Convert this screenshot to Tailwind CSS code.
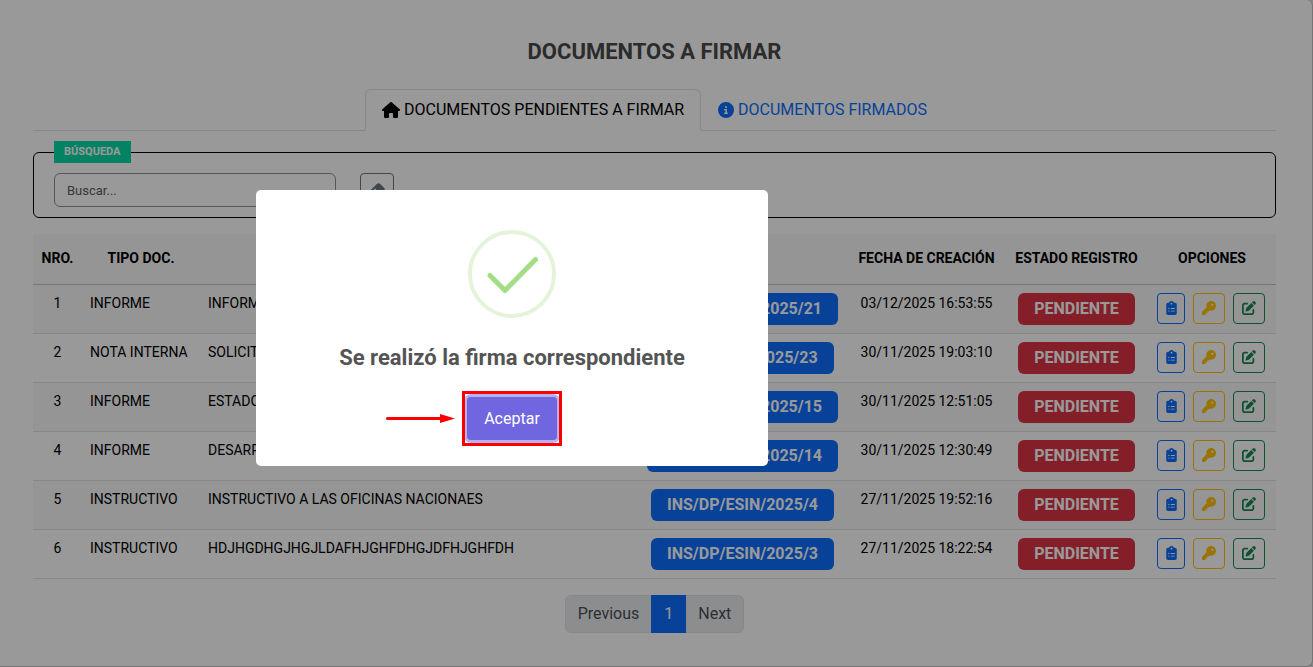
<!DOCTYPE html>
<html lang="es">
<head>
    <meta charset="UTF-8">
    <meta name="viewport" content="width=device-width, initial-scale=1.0">
    <title>Documentos a firmar</title>
    <script src="https://cdn.jsdelivr.net/npm/@tailwindcss/browser@4"></script>
</head>
<body class="bg-[#dcdcdc] font-['Roboto','Liberation_Sans',sans-serif] text-base text-black">
    <!-- Icons -->
    <svg class="hidden">
        <symbol id="house" viewBox="0 0 576 512"><path d="M575.8 255.5c0 18-15 32.1-32 32.1h-32l.7 160.2c0 2.7-.2 5.4-.5 8.1V472c0 22.1-17.9 40-40 40H456c-1.1 0-2.2 0-3.3-.1c-1.4 .1-2.8 .1-4.2 .1H416 392c-22.1 0-40-17.9-40-40V448 384c0-17.7-14.3-32-32-32H256c-17.7 0-32 14.3-32 32v64 24c0 22.1-17.9 40-40 40H160 128.1c-1.5 0-3-.1-4.5-.2c-1.2 .1-2.4 .2-3.6 .2H104c-22.1 0-40-17.9-40-40V360c0-.9 0-1.9 .1-2.8V287.6H32c-18 0-32-14-32-32.1c0-9 3-17 10-24L266.4 8c7-7 15-8 22-8s15 2 21 7L564.8 231.5c8 7 12 15 11 24z"/></symbol>
        <symbol id="info" viewBox="0 0 512 512"><path d="M256 512A256 256 0 1 0 256 0a256 256 0 1 0 0 512zM216 336h24V272H216c-13.3 0-24-10.7-24-24s10.7-24 24-24h48c13.3 0 24 10.7 24 24v88h8c13.3 0 24 10.7 24 24s-10.7 24-24 24H216c-13.3 0-24-10.7-24-24s10.7-24 24-24zm40-208a32 32 0 1 1 0 64 32 32 0 1 1 0-64z"/></symbol>
        <symbol id="eraser" viewBox="0 0 576 512"><path d="M290.7 57.4L57.4 290.7c-25 25-25 65.5 0 90.5l80 80c12 12 28.3 18.7 45.3 18.7H288h9.4H512c17.7 0 32-14.3 32-32s-14.3-32-32-32H387.9L518.6 285.3c25-25 25-65.5 0-90.5L381.3 57.4c-25-25-65.5-25-90.5 0zM297.4 416H288l-105.4 0-80-80L227.3 211.3 364.7 348.7 297.4 416z"/></symbol>
        <symbol id="clipboard" viewBox="0 0 384 512"><path d="M192 0c-41.8 0-77.4 26.7-90.5 64H64C28.7 64 0 92.7 0 128V448c0 35.3 28.7 64 64 64H320c35.3 0 64-28.7 64-64V128c0-35.3-28.7-64-64-64H282.5C269.4 26.7 233.8 0 192 0zm0 64a32 32 0 1 1 0 64 32 32 0 1 1 0-64zM72 272a24 24 0 1 1 48 0 24 24 0 1 1 -48 0zm104-16H304c8.8 0 16 7.2 16 16s-7.2 16-16 16H176c-8.8 0-16-7.2-16-16s7.2-16 16-16zM72 368a24 24 0 1 1 48 0 24 24 0 1 1 -48 0zm88 0c0-8.8 7.2-16 16-16H304c8.8 0 16 7.2 16 16s-7.2 16-16 16H176c-8.8 0-16-7.2-16-16z"/></symbol>
        <symbol id="key" viewBox="0 0 512 512"><path d="M336 352c97.2 0 176-78.8 176-176S433.2 0 336 0S160 78.8 160 176c0 18.7 2.9 36.8 8.3 53.7L7 391c-4.5 4.5-7 10.6-7 17v80c0 13.3 10.7 24 24 24h80c13.3 0 24-10.7 24-24V448h40c13.3 0 24-10.7 24-24V384h40c6.4 0 12.5-2.5 17-7l33.3-33.3c16.9 5.4 35 8.3 53.7 8.3zM376 96a40 40 0 1 1 0 80 40 40 0 1 1 0-80z"/></symbol>
        <symbol id="edit" viewBox="0 0 512 512"><path d="M471.6 21.7c-21.9-21.9-57.3-21.9-79.2 0L362.3 51.7l97.9 97.9 30.1-30.1c21.9-21.9 21.9-57.3 0-79.2L471.6 21.7zm-299.2 220c-6.1 6.1-10.8 13.6-13.5 21.9l-29.6 88.8c-2.9 8.6-.6 18.1 5.8 24.6s15.9 8.7 24.6 5.8l88.8-29.6c8.2-2.7 15.7-7.4 21.9-13.5L437.7 172.3 339.7 74.3 172.4 241.7zM96 64C43 64 0 107 0 160V416c0 53 43 96 96 96H352c53 0 96-43 96-96V320c0-17.7-14.3-32-32-32s-32 14.3-32 32v96c0 17.7-14.3 32-32 32H96c-17.7 0-32-14.3-32-32V160c0-17.7 14.3-32 32-32h96c17.7 0 32-14.3 32-32s-14.3-32-32-32H96z"/></symbol>
    </svg>

    <main class="bg-white border-r border-b border-[#c4c4c4] rounded-r-md pl-[33px] pr-9 pt-9 pb-[33px]">
        <h1 class="text-[22px] leading-8 font-bold text-center text-[#4a4a4a]">DOCUMENTOS A FIRMAR</h1>

        <nav class="mt-[21px] flex justify-center border-b border-[#dee2e6]">
            <a href="#pendientes" class="-mb-px flex items-center gap-1 border border-b-white border-[#dee2e6] rounded-t-md bg-white px-4 py-2">
                <svg class="w-[18px] h-4"><use href="#house"/></svg>
                DOCUMENTOS PENDIENTES A FIRMAR
            </a>
            <a href="#firmados" class="-mb-px flex items-center gap-1 border border-transparent px-4 py-2 text-[#0d6efd] fill-[#0d6efd]">
                <svg class="size-4"><use href="#info"/></svg>
                DOCUMENTOS FIRMADOS
            </a>
        </nav>

        <fieldset class="mt-[10px] border border-black rounded-md px-5 pb-[10px]">
            <legend class="bg-[#06dba6] px-[10px] text-[11px] leading-[22px] font-bold text-white">BÚSQUEDA</legend>
            <div class="pt-[10px] flex gap-6">
                <input type="text" aria-label="Buscar" placeholder="Buscar..." class="w-[282px] h-[34px] border border-[#8c9196] rounded-md px-3 text-[13px] placeholder:text-[#595c5f]">
                <button aria-label="Limpiar" class="w-[34px] h-[34px] flex items-center justify-center border border-[#6c757d] rounded-sm fill-[#6c757d]">
                    <svg class="w-[18px] h-4"><use href="#eraser"/></svg>
                </button>
            </div>
        </fieldset>

        <table class="mt-4 w-full table-fixed text-sm leading-[21px]">
            <thead>
                <tr class="h-[50px] bg-[#f8f8f8] border-b border-[#c6c7c8]">
                    <th class="w-[49px]">NRO.</th>
                    <th class="w-[118px]">TIPO DOC.</th>
                    <th>ASUNTO</th>
                    <th class="w-[211px]">CITE</th>
                    <th class="w-[157px]">FECHA DE CREACIÓN</th>
                    <th class="w-[143px]">ESTADO REGISTRO</th>
                    <th class="w-[128px]">OPCIONES</th>
                </tr>
            </thead>
            <tbody id="rows"></tbody>
        </table>

        <div class="mt-4 flex justify-center">
            <div class="flex h-[38px] rounded-md border border-[#dee2e6] bg-[#e9ecef] text-[#495057]">
                <button class="px-3">Previous</button>
                <button class="-my-px px-[13px] bg-[#0d6efd] text-white">1</button>
                <button class="px-3">Next</button>
            </div>
        </div>
    </main>

    <!-- Confirmation modal -->
    <div class="fixed inset-0 bg-black/40 flex items-center justify-center pr-[289px] pb-[11px]">
        <div role="dialog" aria-labelledby="modalTitle" class="w-lg bg-white rounded-[5px] flex flex-col items-center pt-10 pb-[26px]">
            <svg class="size-[88px]" viewBox="0 0 88 88" fill="none">
                <circle cx="44" cy="44" r="42" stroke="#a5dc86" stroke-opacity=".3" stroke-width="4"/>
                <path d="M22 45.500L37 60.500L67.500 29.500" stroke="#a5dc86" stroke-width="5" stroke-linecap="round" stroke-linejoin="round"/>
            </svg>
            <h2 id="modalTitle" class="mt-[22px] text-[22px] leading-9 font-bold text-[#545454]">Se realizó la firma correspondiente</h2>
            <div class="relative mt-[21px]">
                <button id="accept" class="block h-[43px] px-[17px] rounded-sm bg-[#7066e0] text-white ring-3 ring-[#7066e0]/50">Aceptar</button>
                <div class="absolute -inset-x-[5px] -inset-y-[6px] border-3 border-[#ff0000] pointer-events-none"></div>
                <svg class="absolute right-full mr-3 top-4 w-[70px] h-3" viewBox="0 0 70 12">
                    <path d="M2.500 5.500H56" stroke="#f00" stroke-width="3" stroke-linecap="round"/>
                    <path d="M55 1L70 5.500L55 10z" fill="#f00"/>
                </svg>
            </div>
        </div>
    </div>

    <script>
        const docs = [
            ["INFORME", "INFORME", "INF/DP/ESIN/2025/21", "03/12/2025 16:53:55"],
            ["NOTA INTERNA", "SOLICITUD", "NI/DP/ESIN/2025/23", "30/11/2025 19:03:10"],
            ["INFORME", "ESTADO", "INF/DP/ESIN/2025/15", "30/11/2025 12:51:05"],
            ["INFORME", "DESARROLLO", "INF/DP/ESIN/2025/14", "30/11/2025 12:30:49"],
            ["INSTRUCTIVO", "INSTRUCTIVO A LAS OFICINAS NACIONAES", "INS/DP/ESIN/2025/4", "27/11/2025 19:52:16"],
            ["INSTRUCTIVO", "HDJHGDHGJHGJLDAFHJGHFDHGJDFHJGHFDH", "INS/DP/ESIN/2025/3", "27/11/2025 18:22:54"]
        ];

        document.getElementById("rows").innerHTML = docs.map(([type, subject, code, date], i) => `
            <tr class="h-[49px] border-b border-[#dee2e6] odd:bg-[#f8f8f8] align-top">
                <td class="p-2 text-center">${i + 1}</td>
                <td class="p-2">${type}</td>
                <td class="p-2">${subject}</td>
                <td class="p-2 text-center"><span class="inline-block align-top rounded-md bg-[#0d6efd] px-4 text-base leading-8 font-bold text-white">${code}</span></td>
                <td class="p-2 text-center">${date}</td>
                <td class="p-2 text-center"><span class="inline-block align-top rounded-md bg-[#dc3545] px-4 text-base leading-8 font-bold text-white">PENDIENTE</span></td>
                <td class="py-2 pl-2 pr-[10px]">
                    <div class="flex justify-center gap-2">
                        <button aria-label="Ver detalle" class="flex items-center justify-center w-7 h-[31px] border border-[#0d6efd] rounded-sm fill-[#0d6efd]"><svg class="w-[11px] h-[14px]"><use href="#clipboard"/></svg></button>
                        <button aria-label="Firmar" class="flex items-center justify-center w-8 h-[31px] border border-[#ffc107] rounded-sm fill-[#ffc107]"><svg class="size-[14px]"><use href="#key"/></svg></button>
                        <button aria-label="Editar" class="flex items-center justify-center w-8 h-[31px] border border-[#198754] rounded-sm fill-[#198754]"><svg class="size-[14px]"><use href="#edit"/></svg></button>
                    </div>
                </td>
            </tr>`).join("");

        document.getElementById("accept").addEventListener("click", (e) => {
            e.target.closest(".fixed").classList.add("hidden");
        });
    </script>
</body>
</html>
